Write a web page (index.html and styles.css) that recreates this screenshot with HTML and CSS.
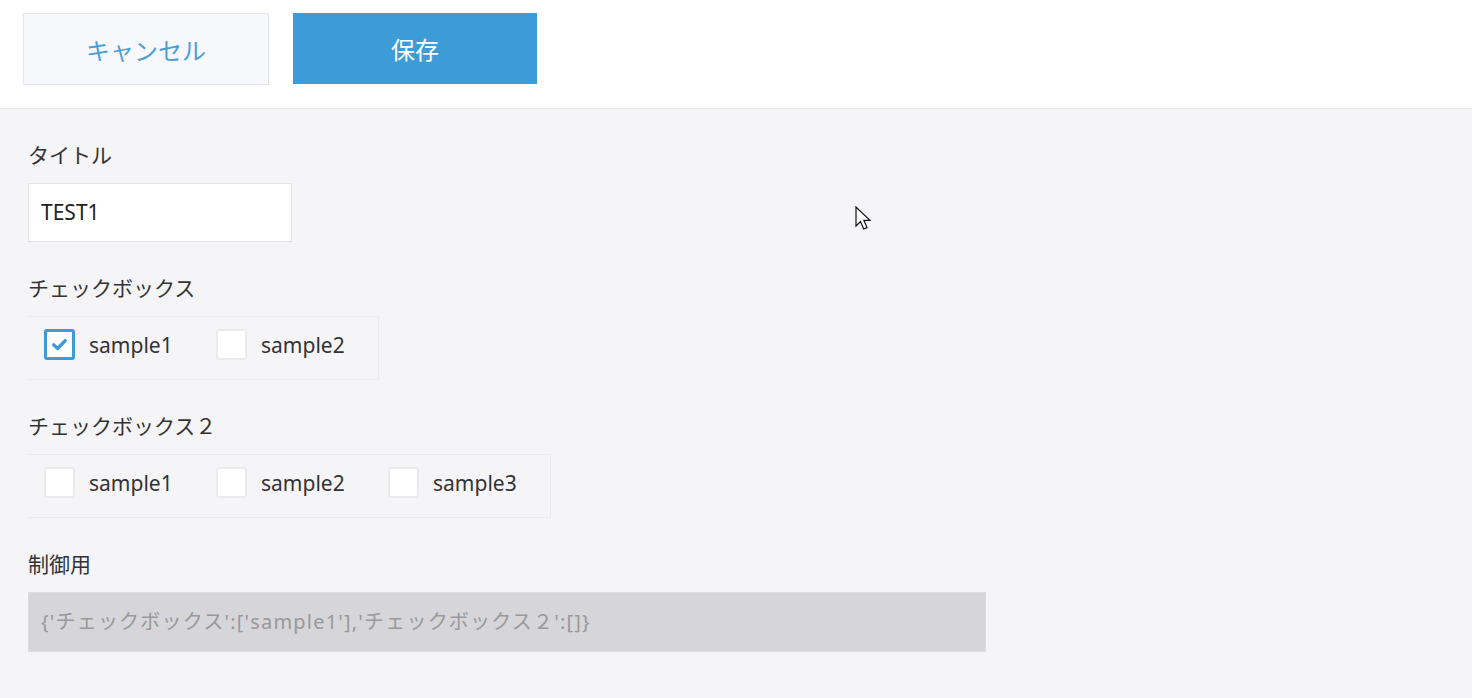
FILE: index.html
```html
<!DOCTYPE html>
<html lang="ja">
<head>
<meta charset="utf-8">
<title>Form</title>
<link rel="stylesheet" href="styles.css">
</head>
<body>
<header class="toolbar">
  <button class="btn btn-cancel">キャンセル</button>
  <button class="btn btn-save">保存</button>
</header>
<main class="form">
  <div class="field">
    <div class="label">タイトル</div>
    <div class="text-input">TEST1</div>
  </div>
  <div class="field">
    <div class="label">チェックボックス</div>
    <div class="check-group">
      <label class="check-item"><span class="box checked"><svg viewBox="0 0 16 16" width="17" height="17"><path d="M2.6 8.4 L6.3 11.8 L13.4 4.4" fill="none" stroke="#3d9bd8" stroke-width="3.2" stroke-linecap="round" stroke-linejoin="round"/></svg></span><span class="check-text">sample1</span></label>
      <label class="check-item"><span class="box"></span><span class="check-text">sample2</span></label>
    </div>
  </div>
  <div class="field">
    <div class="label">チェックボックス２</div>
    <div class="check-group">
      <label class="check-item"><span class="box"></span><span class="check-text">sample1</span></label>
      <label class="check-item"><span class="box"></span><span class="check-text">sample2</span></label>
      <label class="check-item"><span class="box"></span><span class="check-text">sample3</span></label>
    </div>
  </div>
  <div class="field">
    <div class="label">制御用</div>
    <div class="disabled-input">{'チェックボックス':['sample1'],'チェックボックス２':[]}</div>
  </div>
</main>
<svg class="cursor" width="20" height="28" viewBox="0 0 20 28"><path d="M1 1 L1 20 L5.5 15.5 L8.7 23 L12 21.6 L8.9 14.3 L15 14.3 Z" fill="#fff" stroke="#111" stroke-width="1.2" stroke-linejoin="miter"/></svg>
</body>
</html>
```
FILE: styles.css
```css
html, body {
  margin: 0;
  padding: 0;
}
body {
  background: #f5f4f7;
  font-family: "Noto Sans", "Noto Sans CJK JP", sans-serif;
  color: #333;
  height: 698px;
  overflow: hidden;
  position: relative;
}
.toolbar {
  background: #fff;
  height: 109px;
  border-bottom: 1px solid #e3e3e6;
  display: flex;
  align-items: flex-start;
  padding: 13px 0 0 23px;
  box-sizing: border-box;
  gap: 24px;
}
.btn {
  height: 72px;
  font-family: "Noto Sans CJK JP", sans-serif;
  font-size: 24px;
  border: 1px solid #e3e3e8;
  cursor: pointer;
  padding: 0;
}
.btn-cancel {
  width: 246px;
  background: #f7f8fb;
  color: #4a9fd8;
}
.btn-save {
  width: 244px;
  height: 71px;
  background: #3d9bd8;
  border-color: #3d9bd8;
  color: #fff;
}
.form {
  padding: 30px 0 0 28px;
}
.field {
  margin-bottom: 30px;
}
.label {
  font-family: "Noto Sans CJK JP", sans-serif;
  font-size: 21px;
  line-height: 30px;
  height: 30px;
  margin-bottom: 14px;
  color: #333;
}
.text-input {
  width: 264px;
  height: 59px;
  box-sizing: border-box;
  background: #fff;
  border: 1px solid #e3e3e6;
  font-size: 21px;
  line-height: 57px;
  padding-left: 12px;
  color: #222;
}
.check-group {
  display: inline-flex;
  align-items: flex-start;
  height: 64px;
  box-sizing: border-box;
  border: 1px solid #ebeaee;
  border-left: none;
  padding: 12px 32px 0 16px;
  gap: 42px;
}
.check-item {
  display: flex;
  align-items: center;
  gap: 14px;
}
.box {
  width: 31px;
  height: 31px;
  box-sizing: border-box;
  background: #fff;
  border: 2px solid #ebebee;
  border-radius: 3px;
  display: flex;
  align-items: center;
  justify-content: center;
}
.box.checked {
  border: 3px solid #3d9bd8;
}
.check-text {
  font-size: 21px;
  color: #333;
  width: 85px;
}
.disabled-input {
  width: 958px;
  height: 60px;
  box-sizing: border-box;
  background: #d6d5da;
  border: 1px solid #dcdbe0;
  color: #999;
  font-size: 20px;
  letter-spacing: 1.2px;
  line-height: 58px;
  padding-left: 12px;
  font-family: "Noto Sans", "Noto Sans CJK JP", sans-serif;
}
.cursor {
  position: absolute;
  left: 855px;
  top: 206px;
}
```
